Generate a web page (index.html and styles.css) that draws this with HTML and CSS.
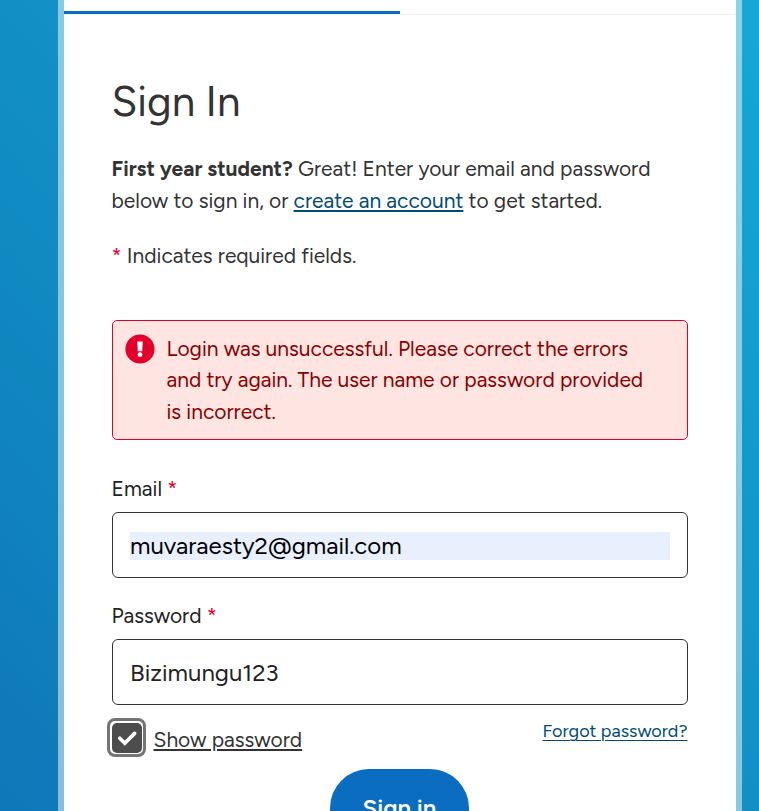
FILE: index.html
```html
<!DOCTYPE html>
<html lang="en">
<head>
<meta charset="utf-8">
<title>Sign In</title>
<link rel="stylesheet" href="styles.css">
</head>
<body>
<main class="card">
  <div class="tabs"><span class="tab tab-active"></span></div>
  <section class="content">
    <h1>Sign In</h1>
    <p class="intro"><strong>First year student?</strong> Great! Enter your email and password<br>below to sign in, or <a class="create" href="#">create an account</a> to get started.</p>
    <p class="required-note"><span class="star">*</span> Indicates required fields.</p>
    <div class="alert" role="alert">
      <svg class="alert-icon" viewBox="0 0 30 30"><circle cx="15" cy="15" r="14.6" fill="#e4002b"/><path d="M12.2 7.4h5.6l-.6 9.8h-4.4z" fill="#fff"/><circle cx="15" cy="20.7" r="2.4" fill="#fff"/></svg>
      <p>Login was unsuccessful. Please correct the errors<br>and try again. The user name or password provided<br>is incorrect.</p>
    </div>
    <label class="label" for="email">Email <span class="star">*</span></label>
    <div class="field"><input class="autofilled" id="email" type="text" value="muvaraesty2@gmail.com"></div>
    <label class="label" for="password">Password <span class="star">*</span></label>
    <div class="field"><input id="password" type="text" value="Bizimungu123"></div>
    <div class="options">
      <label class="show"><span class="checkbox"><svg viewBox="0 0 30 30"><path d="M7.8 15.2l5 5 9.8-9.8" fill="none" stroke="#fff" stroke-width="3.7" stroke-linecap="round" stroke-linejoin="miter"/></svg></span><span class="show-text">Show password</span></label>
      <a class="forgot" href="#">Forgot password?</a>
    </div>
    <button class="submit">Sign in</button>
  </section>
</main>
</body>
</html>
```

FILE: styles.css
```css
* { box-sizing: border-box; }
html { height: 100%; overflow: hidden; }
body {
  height: 811px;
  margin: 0;
  overflow: hidden;
  background: linear-gradient(to top right, #0e78b6, #15a8d6);
  color: #333;
  font: 21px/32px Figtree, Lato, sans-serif;
}
.card {
  width: 684px;
  height: 820px;
  margin-left: 58px;
  border: solid rgba(255, 255, 255, .5);
  border-width: 0 6px;
  background: #fff padding-box;
}
.tabs { display: flex; height: 15px; border-bottom: 1px solid #f3f3f3; }
.tab { width: 50%; height: 14px; }
.tab-active { border-bottom: 3px solid #0b6dbf; }
.content { padding: 61px 48px 0; }
h1 { margin: 0 0 0 -0.5px; font-size: 42px; line-height: 52px; font-weight: 400; }
p { margin: 0; white-space: nowrap; }
.intro, .required-note, .label, .alert p { margin-left: -0.5px; }
.intro { margin-top: 25px; }
a { color: #004b7a; text-underline-offset: 3px; }
.create { text-decoration-thickness: 2px; text-underline-offset: 2px; }
.required-note { margin-top: 23px; }
.star { color: #e4002b; }
.alert {
  display: flex;
  height: 120px;
  margin-top: 48px;
  padding: 12px;
  gap: 12px;
  border: 1px solid #e4002b;
  border-radius: 5px;
  background: #ffe5e2;
  color: #8a0000;
  line-height: 31.4px;
}
.alert-icon { flex: none; width: 30px; height: 30px; margin-top: 1px; }
.label { display: block; height: 32px; margin-top: 33px; color: #222; }
.field {
  height: 66px;
  margin-top: 7px;
  padding: 19px 17px 17px;
  border: 1px solid #333;
  border-radius: 6px;
}
.field + .label { margin-top: 22px; }
input {
  display: block;
  width: 100%;
  height: 28px;
  padding: 0;
  border: 0;
  outline: 0;
  background: transparent;
  color: #222;
  font: 24px/28px Figtree, Lato, sans-serif;
}
.autofilled { background: #e8f0fe; color: #000; }
.options { display: flex; justify-content: space-between; height: 64px; padding-top: 10px; }
.show { display: flex; align-items: flex-start; gap: 8px; margin: 3px 0 0 -5px; }
.checkbox { width: 39px; height: 39px; border: 3px solid #757575; border-radius: 8px; padding: 1.5px; }
.checkbox svg { display: block; width: 30px; height: 30px; border-radius: 5px; background: #4d4d4d; }
.show-text { padding-top: 6px; margin-left: -0.5px; text-decoration: underline 2px; text-underline-offset: 2px; }
.forgot { margin-right: 0.5px; font-size: 18px; text-decoration-thickness: 1px; text-underline-offset: 3px; }
.submit {
  display: block;
  width: 139px;
  height: 78px;
  margin: 0 0 0 218px;
  padding: 0;
  border: 0;
  border-radius: 39px;
  background: #0b6dbf;
  color: #fff;
  font: 600 24px/32px Figtree, Lato, sans-serif;
}
```
